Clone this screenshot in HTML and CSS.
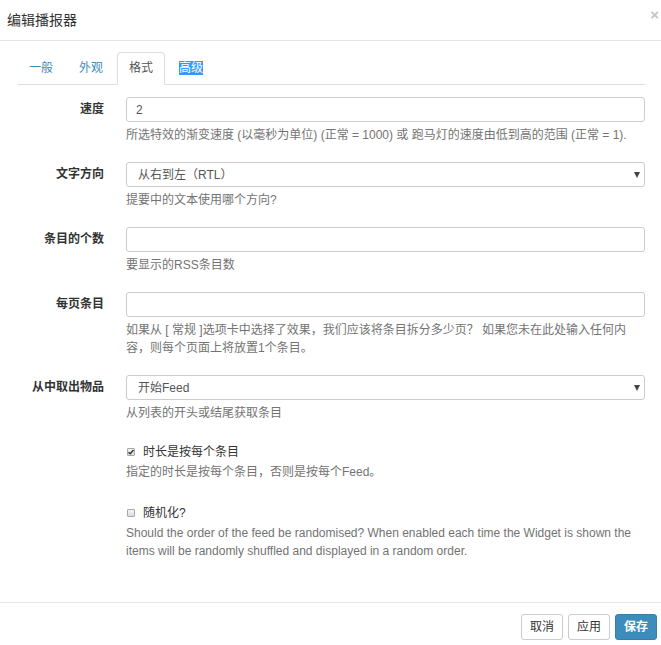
FILE: index.html
```html
<!DOCTYPE html>
<html lang="zh-CN">
<head>
<meta charset="utf-8">
<title>编辑播报器</title>
<link rel="stylesheet" href="styles.css">
</head>
<body>
<div class="modal">
  <div class="modal-header">
    <h4 class="modal-title">编辑播报器</h4>
    <button class="close" type="button">×</button>
  </div>
  <div class="modal-body">
    <ul class="tabs">
      <li class="tab"><a class="tab-link">一般</a></li>
      <li class="tab"><a class="tab-link">外观</a></li>
      <li class="tab active"><a class="tab-link">格式</a></li>
      <li class="tab"><a class="tab-link"><span class="selected-text">高级</span></a></li>
    </ul>
    <form class="form">
      <div class="row">
        <label class="row-label">速度</label>
        <div class="field">
          <input class="control" type="text" value="2">
          <p class="help">所选特效的渐变速度 (以毫秒为单位) (正常 = 1000) 或 跑马灯的速度由低到高的范围 (正常 = 1).</p>
        </div>
      </div>
      <div class="row">
        <label class="row-label">文字方向</label>
        <div class="field">
          <div class="select-wrap">
            <select class="control select"><option>从右到左（RTL）</option></select>
          </div>
          <p class="help">提要中的文本使用哪个方向?</p>
        </div>
      </div>
      <div class="row">
        <label class="row-label">条目的个数</label>
        <div class="field">
          <input class="control" type="text" value="">
          <p class="help">要显示的RSS条目数</p>
        </div>
      </div>
      <div class="row">
        <label class="row-label">每页条目</label>
        <div class="field">
          <input class="control" type="text" value="">
          <p class="help">如果从 [ 常规 ]选项卡中选择了效果，我们应该将条目拆分多少页？ 如果您未在此处输入任何内<br>容，则每个页面上将放置1个条目。</p>
        </div>
      </div>
      <div class="row row-tight">
        <label class="row-label">从中取出物品</label>
        <div class="field">
          <div class="select-wrap">
            <select class="control select"><option>开始Feed</option></select>
          </div>
          <p class="help">从列表的开头或结尾获取条目</p>
        </div>
      </div>
      <div class="row row-check">
        <span class="row-label"></span>
        <div class="field">
          <div class="check"><span class="box checked"><svg viewBox="0 0 8 8" width="8" height="8"><path d="M1.5 4.2 L3.2 5.8 L6.5 2" fill="none" stroke="#333" stroke-width="1.4"/></svg></span>时长是按每个条目</div>
          <p class="help help-check">指定的时长是按每个条目，否则是按每个Feed。</p>
        </div>
      </div>
      <div class="row row-check row-last">
        <span class="row-label"></span>
        <div class="field">
          <div class="check"><span class="box"></span>随机化?</div>
          <p class="help help-check">Should the order of the feed be randomised? When enabled each time the Widget is shown the items will be randomly shuffled and displayed in a random order.</p>
        </div>
      </div>
    </form>
  </div>
  <div class="modal-footer">
    <button class="btn" type="button">取消</button>
    <button class="btn" type="button">应用</button>
    <button class="btn btn-primary" type="button">保存</button>
  </div>
</div>
</body>
</html>
```

FILE: styles.css
```css
* { box-sizing: border-box; }

html, body {
  margin: 0;
  padding: 0;
  background: #fff;
}

body {
  font-family: "Liberation Sans", "Noto Sans CJK SC", sans-serif;
  font-size: 12px;
  line-height: 18px;
  color: #333;
}

.modal {
  width: 661px;
  height: 645px;
  background: #fff;
}

.modal-header {
  display: flex;
  justify-content: space-between;
  align-items: flex-start;
  height: 41px;
  padding: 10px 2px 0 7px;
  border-bottom: 1px solid #e5e5e5;
}

.modal-title {
  margin: 0;
  font-size: 14px;
  font-weight: normal;
  line-height: 20px;
  color: #333;
}

.close {
  border: 0;
  background: none;
  padding: 0;
  margin-top: -5px;
  font-family: "Liberation Sans", sans-serif;
  font-size: 15px;
  font-weight: bold;
  line-height: 20px;
  color: #c4c4c4;
}

.modal-body {
  padding: 11px 16px 42px 18px;
}

.tabs {
  display: flex;
  margin: 0;
  padding: 0;
  list-style: none;
  border-bottom: 1px solid #ddd;
}

.tab {
  margin-right: 2px;
  margin-bottom: -1px;
}

.tab:first-child {
  margin-left: -1px;
}

.tab-link {
  display: block;
  padding: 8px 11px;
  line-height: 15px;
  border: 1px solid transparent;
  border-radius: 4px 4px 0 0;
  color: #3c8dbc;
  cursor: pointer;
}

.tab.active .tab-link {
  color: #555;
  background: #fff;
  border-color: #ddd #ddd transparent;
}

.selected-text {
  background: #3399ff;
  color: #fff;
}

.form {
  margin-top: 12px;
}

.row {
  display: grid;
  grid-template-columns: 86px 1fr;
  column-gap: 22px;
  margin-bottom: 18px;
}

.row-label {
  text-align: right;
  font-weight: bold;
  line-height: 25px;
  color: #333;
}

.field {
  min-width: 0;
}

.control {
  display: block;
  width: 100%;
  height: 25px;
  margin: 0;
  padding: 0 9px;
  font-family: inherit;
  font-size: 12px;
  color: #555;
  background: #fff;
  border: 1px solid #ccc;
  border-radius: 3px;
  outline: none;
}

.select-wrap {
  position: relative;
}

.select {
  appearance: none;
  -webkit-appearance: none;
  padding: 0 24px 0 11px;
}

.select-wrap::after {
  content: "";
  position: absolute;
  right: 5px;
  top: 10px;
  border-left: 3.5px solid transparent;
  border-right: 3.5px solid transparent;
  border-top: 6px solid #444;
  pointer-events: none;
}

.help {
  margin: 4px 0 0;
  color: #737373;
  line-height: 18px;
}

.row-check {
  margin-bottom: 20px;
}

.row-last {
  margin-bottom: 0;
}

.check {
  display: flex;
  align-items: center;
  padding-top: 3px;
  line-height: 18px;
  color: #333;
}

.box {
  display: inline-flex;
  width: 8px;
  height: 8px;
  margin: 0 8px 0 1px;
  border: 1px solid #a8a8a8;
  border-radius: 1px;
  background: linear-gradient(#f4f4f4, #dcdcdc);
  position: relative;
}

.box svg {
  position: absolute;
  left: -1px;
  top: -1px;
}

.help-check {
  margin-top: 2px;
}

.modal-footer {
  display: flex;
  justify-content: flex-end;
  gap: 5px;
  padding: 11px 4px 0 0;
  border-top: 1px solid #e5e5e5;
}

.btn {
  height: 26px;
  padding: 0 8px;
  font-family: inherit;
  font-size: 12px;
  line-height: 24px;
  color: #333;
  background: #fff;
  border: 1px solid #ccc;
  border-radius: 3px;
  cursor: pointer;
}

.btn-primary {
  color: #fff;
  font-weight: bold;
  background: #3c8dbc;
  border-color: #367fa9;
}
```
